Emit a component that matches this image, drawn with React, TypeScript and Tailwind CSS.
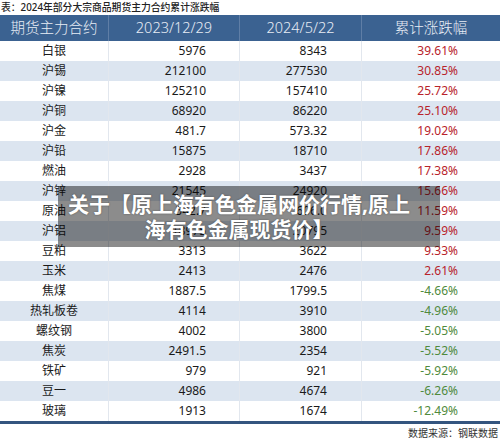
import React from "react";

type Row = { name: string; a: string; b: string; p: string; up: boolean };

const rows: Row[] = [
  { name: "白银", a: "5976", b: "8343", p: "39.61%", up: true },
  { name: "沪锡", a: "212100", b: "277530", p: "30.85%", up: true },
  { name: "沪镍", a: "125210", b: "157410", p: "25.72%", up: true },
  { name: "沪铜", a: "68920", b: "86220", p: "25.10%", up: true },
  { name: "沪金", a: "481.7", b: "573.32", p: "19.02%", up: true },
  { name: "沪铅", a: "15875", b: "18710", p: "17.86%", up: true },
  { name: "燃油", a: "2928", b: "3437", p: "17.38%", up: true },
  { name: "沪锌", a: "21545", b: "24920", p: "15.66%", up: true },
  { name: "原油", a: "542.7", b: "606.0", p: "11.59%", up: true },
  { name: "沪铝", a: "18975", b: "20795", p: "9.59%", up: true },
  { name: "豆粕", a: "3313", b: "3622", p: "9.33%", up: true },
  { name: "玉米", a: "2413", b: "2476", p: "2.61%", up: true },
  { name: "焦煤", a: "1887.5", b: "1799.5", p: "-4.66%", up: false },
  { name: "热轧板卷", a: "4114", b: "3910", p: "-4.96%", up: false },
  { name: "螺纹钢", a: "4002", b: "3800", p: "-5.05%", up: false },
  { name: "焦炭", a: "2491.5", b: "2354", p: "-5.52%", up: false },
  { name: "铁矿", a: "979", b: "921", p: "-5.92%", up: false },
  { name: "豆一", a: "4986", b: "4674", p: "-6.26%", up: false },
  { name: "玻璃", a: "1913", b: "1674", p: "-12.49%", up: false },
];

const font = { fontFamily: '"Noto Sans", "Noto Sans CJK SC", sans-serif' };

export default function App() {
  return (
    <div className="relative w-[500px] h-[439px] bg-white overflow-hidden" style={font}>
      <div className="h-[15px] flex items-center text-[9.8px] leading-none text-[#222] pl-[1px] font-medium">
        表：2024年部分大宗商品期货主力合约累计涨跌幅
      </div>
      <div className="grid grid-cols-[109px_131px_122px_1fr] h-[26px] bg-[#3b6291] text-[#e8edf5] text-[14.5px] font-light">
        <div className="flex items-center justify-center border-r border-[#5f7ea6]">期货主力合约</div>
        <div className="flex items-center justify-center border-r border-[#5f7ea6]">2023/12/29</div>
        <div className="flex items-center justify-center border-r border-[#5f7ea6]">2024/5/22</div>
        <div className="flex items-center justify-center">累计涨跌幅</div>
      </div>
      <div className="border-b-[3px] border-[#34557f]">
        {rows.map((r, i) => (
          <div
            key={r.name}
            className={`grid grid-cols-[109px_131px_122px_1fr] h-[20px] text-[12px] text-[#1a1a1a] ${
              i % 2 === 1 ? "bg-[#dce5f0]" : "bg-white"
            }`}
          >
            <div className="flex items-center justify-center border-r border-[#e2e7ee]">{r.name}</div>
            <div className="flex items-center justify-end pr-[33px] border-r border-[#e2e7ee]">{r.a}</div>
            <div className="flex items-center justify-end pr-[34px] border-r border-[#e2e7ee]">{r.b}</div>
            <div
              className={`flex items-center justify-end pr-[42px] ${
                r.up ? "text-[#b8232b]" : "text-[#4f8a3c]"
              }`}
            >
              {r.p}
            </div>
          </div>
        ))}
      </div>
      <div className="flex justify-end pr-[2px] pt-[4px] text-[10px] leading-none text-[#333]">
        数据来源：钢联数据
      </div>

      <div className="absolute left-[58px] top-[186px] w-[382px] h-[61px] bg-black/45 flex flex-col items-center justify-center pr-[20px]">
        <div className="text-white font-bold text-[21px] leading-[25px] whitespace-nowrap [text-shadow:0_0_2px_rgba(0,0,0,0.4)]">
          关于【原上海有色金属网价行情,原上
        </div>
        <div className="text-white font-bold text-[21px] leading-[25px] whitespace-nowrap [text-shadow:0_0_2px_rgba(0,0,0,0.4)]">
          海有色金属现货价】
        </div>
      </div>
    </div>
  );
}
